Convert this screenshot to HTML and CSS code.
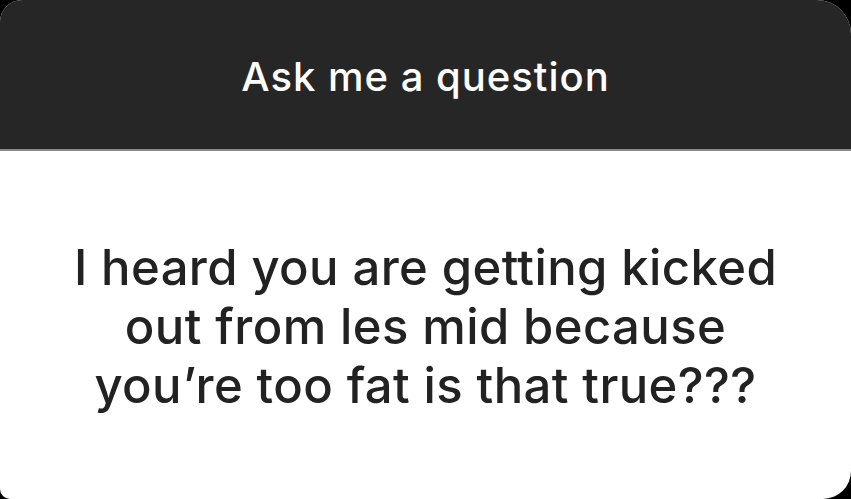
FILE: index.html
```html
<!DOCTYPE html>
<html lang="en">
<head>
    <meta charset="UTF-8">
    <meta name="viewport" content="width=device-width, initial-scale=1.0">
    <title>Ask me a question</title>
    <link rel="stylesheet" href="styles.css">
</head>
<body>
    <div class="card">
        <div class="card-header">
            <h1>Ask me a question</h1>
        </div>
        <div class="card-body">
            <p class="answer">I heard you are getting kicked<br>out from les mid because<br>you’re too fat is that true???</p>
        </div>
    </div>
</body>
</html>
```

FILE: styles.css
```css
html, body {
    margin: 0;
    height: 100%;
}
body {
    background-color: #000;
    font-family: Inter, "Liberation Sans", Arial, sans-serif;
}
.card {
    height: 100%;
    display: flex;
    flex-direction: column;
    background-color: #fff;
    border-radius: 22px 34px 28px 10px;
    overflow: hidden;
}
.card-header {
    height: 151px;
    display: flex;
    align-items: center;
    justify-content: center;
    background-color: #262626;
    border-bottom: 2px solid #8a8a8a;
    box-sizing: border-box;
}
.card-header h1 {
    margin: 0;
    color: #fff;
    font-size: 40px;
    font-weight: 500;
    letter-spacing: 1px;
    padding-top: 4px;
}
.card-body {
    flex: 1;
    display: flex;
    align-items: center;
    justify-content: center;
}
.answer {
    margin: 0;
    text-align: center;
    color: #222;
    font-size: 49px;
    font-weight: 450;
    letter-spacing: 0.4px;
    line-height: 59px;
    padding-top: 2px;
}
```
